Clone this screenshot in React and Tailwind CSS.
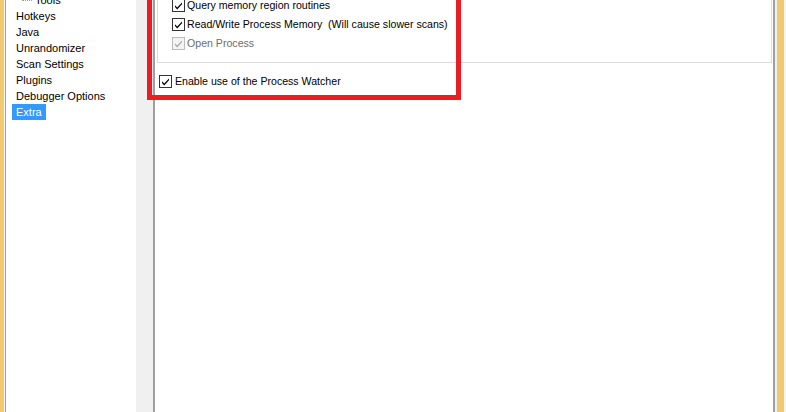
import React from 'react';

const Check = ({ disabled }) => (
  <svg width="13" height="13" viewBox="0 0 13 13" className="shrink-0">
    <rect x="0.5" y="0.5" width="12" height="12" fill={disabled ? '#f4f4f4' : '#fff'} stroke={disabled ? '#bcbcbc' : '#333'} />
    <path d="M3 6.2 L5.2 8.6 L10 3.4 L10 5.2 L5.2 10.4 L3 8 Z" fill={disabled ? '#a9a9a9' : '#000'} />
  </svg>
);

const Option = ({ label, disabled, gap = 'gap-[2px]' }) => (
  <div className={`flex items-center h-[19px] ${gap}`}>
    <Check disabled={disabled} />
    <span className={`whitespace-pre text-[10.6px] ${disabled ? 'text-[#6d6d6d]' : 'text-black'}`}>{label}</span>
  </div>
);

const treeItems = ['Hotkeys', 'Java', 'Unrandomizer', 'Scan Settings', 'Plugins', 'Debugger Options'];

export default function App() {
  return (
    <div className="relative flex h-[412px] w-[786px] overflow-hidden bg-[#f0f0f0] text-[11px] leading-none" style={{ fontFamily: '"Liberation Sans", Arial, sans-serif' }}>
      {/* left window edge */}
      <div className="w-[4px] bg-[#f1ca6f]" />
      <div className="w-[1px] bg-[#fafafa]" />
      <div className="w-[1px] bg-[#a0a0a0]" />

      {/* tree */}
      <div className="w-[130px] bg-white pl-[4px]">
        <div className="flex h-[16px] -mt-[8px] items-center pl-[6px]">
          <span className="ml-[6px] mr-[3px] h-0 w-[10px] border-t border-dotted border-[#a0a0a0]" />
          <span>Tools</span>
        </div>
        {treeItems.map((t) => (
          <div key={t} className="flex h-[16px] items-center pl-[6px]">{t}</div>
        ))}
        <div className="ml-[2px] flex h-[16px] w-fit items-center bg-[#3399ff] px-[4px] text-white">Extra</div>
      </div>

      <div className="w-[17px]" />

      {/* main panel */}
      <div className="flex flex-1 flex-col border-l-2 border-[#a0a0a0] bg-white pl-[2px]">
        <div className="-mt-[20px] mr-[1px] h-[83px] border border-[#dcdcdc] pl-[14px] pt-[15px]">
          <Option label="Query memory region routines" />
          <Option label="Read/Write Process Memory  (Will cause slower scans)" />
          <Option label="Open Process" disabled />
        </div>
        <div className="mt-[9px] pl-[2px]">
          <Option label="Enable use of the Process Watcher" gap="gap-[3px]" />
        </div>
      </div>

      {/* right window edge */}
      <div className="w-[2px] bg-[#a0a0a0]" />
      <div className="w-[2px] bg-[#f0f0f0]" />
      <div className="w-[7px] bg-[#f1ca6f]" />
      <div className="w-[2px] bg-[#f3f3f3]" />

      {/* annotation */}
      <div className="absolute left-[147px] top-[-10px] h-[110px] w-[314px] border-[5px] border-[#ed1c24]" />
    </div>
  );
}
